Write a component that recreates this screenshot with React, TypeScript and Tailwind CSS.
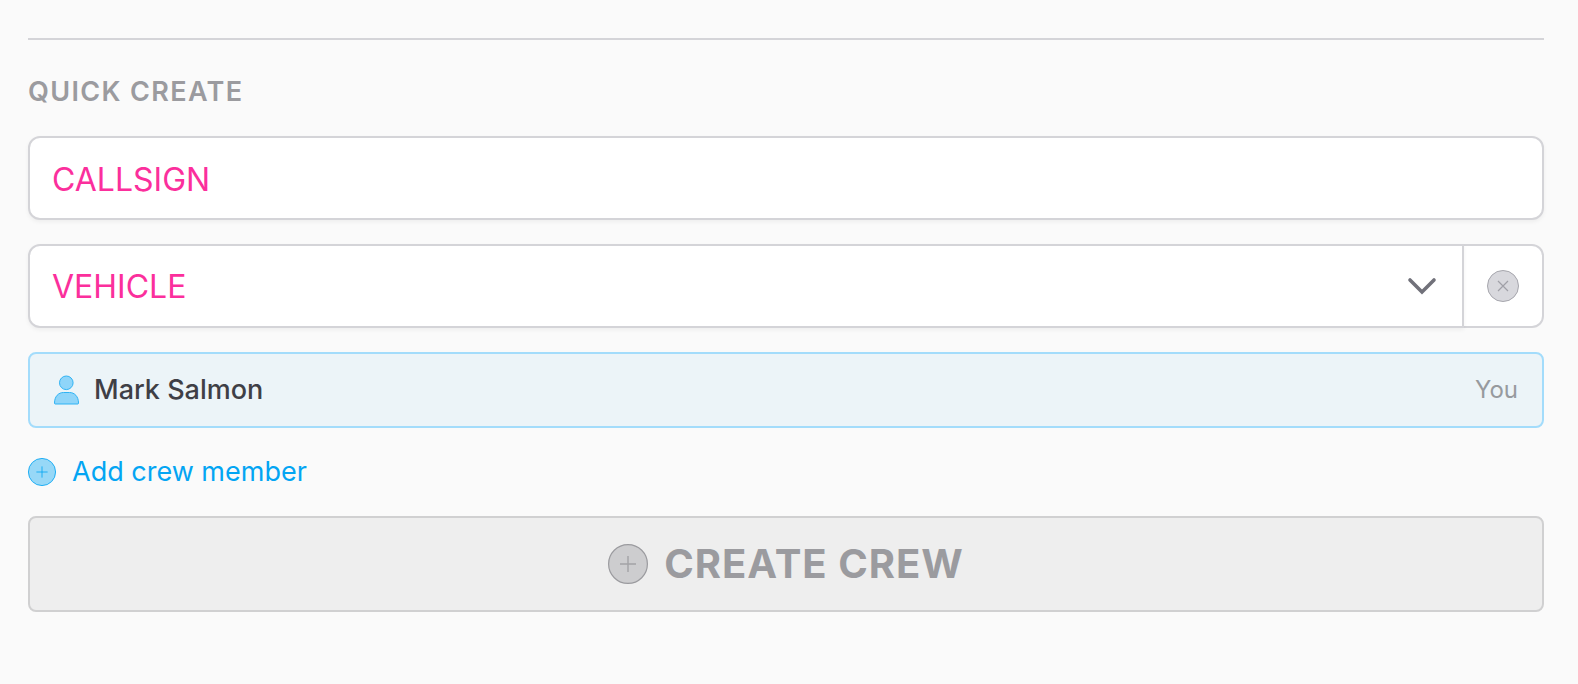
import React, { useState } from "react";

const PlusCircle = ({ className }: { className: string }) => (
  <svg viewBox="0 0 40 40" className={className} fill="none" aria-hidden="true">
    <circle
      cx="20"
      cy="20"
      r="19.4"
      fill="currentColor"
      fillOpacity="0.4"
      stroke="currentColor"
      strokeWidth="1.2"
    />
    <path
      d="M20 12v16M12 20h16"
      stroke="currentColor"
      strokeOpacity="0.85"
      strokeWidth="1.4"
    />
  </svg>
);

const ClearCircle = () => (
  <svg viewBox="0 0 32 32" className="size-8" fill="none" aria-hidden="true">
    <circle cx="16" cy="16" r="15.5" fill="#d8d8dd" stroke="#a6a6ad" />
    <path d="M11 11l10 10M21 11l-10 10" stroke="#a0a0a7" strokeWidth="1.2" />
  </svg>
);

const Person = () => (
  <svg
    viewBox="0 0 26 30"
    className="h-[30px] w-[26px] shrink-0"
    fill="#8fd5f9"
    stroke="#2fb3f4"
    aria-hidden="true"
  >
    <circle cx="12.3" cy="7.8" r="6.8" />
    <path d="M1.2 29h22.600q.7 0 .7-1c0-6.500-4-10.500-9-10.500h-6c-5 0-9 4-9 10.500q0 1 .7 1z" />
  </svg>
);

const App = () => {
  const [callsign, setCallsign] = useState("");
  const [vehicle, setVehicle] = useState("");

  return (
    <div className="min-h-screen bg-[#fafafa] pt-[38px] pr-[34px] pb-[72px] pl-7 font-['Inter',sans-serif]">
      <hr className="border-t-2 border-[#d4d4d8]" />

      <form className="mt-8 flex flex-col gap-6">
        <h2 className="text-[27px] leading-10 font-semibold tracking-wider text-[#9b9b9f] uppercase">
          Quick Create
        </h2>

        <input
          type="text"
          aria-label="Callsign"
          placeholder="CALLSIGN"
          value={callsign}
          onChange={(e) => setCallsign(e.target.value)}
          className="h-21 w-full rounded-xl border-2 border-[#d4d4d8] bg-white px-[22px] pt-0.5 text-[32px] text-[#fb2f9c] shadow-[0_2px_4px_rgba(0,0,0,0.05)] outline-none placeholder:text-[#fb2f9c]"
        />

        {/* Vehicle */}
        <div className="flex">
          <div className="relative grow">
            <select
              aria-label="Vehicle"
              value={vehicle}
              onChange={(e) => setVehicle(e.target.value)}
              className="h-21 w-full appearance-none rounded-l-xl border-2 border-[#d4d4d8] bg-white px-[22px] pt-0.5 text-[32px] text-[#fb2f9c] shadow-[0_2px_4px_rgba(0,0,0,0.05)] outline-none"
            >
              <option value="">VEHICLE</option>
            </select>
            <svg
              viewBox="0 0 32 20"
              className="pointer-events-none absolute top-8 right-[26px] h-5 w-8"
              fill="none"
              stroke="#71717a"
              strokeWidth="3.6"
              strokeLinecap="round"
              aria-hidden="true"
            >
              <path d="M4 4l12 12 12-12" />
            </svg>
          </div>
          <button
            type="button"
            aria-label="Clear vehicle"
            onClick={() => setVehicle("")}
            className="flex h-21 w-20 items-center justify-center rounded-r-xl border-2 border-l-0 border-[#d4d4d8] bg-white"
          >
            <ClearCircle />
          </button>
        </div>

        {/* Crew */}
        <div className="flex h-19 items-center gap-3.5 rounded-lg border-2 border-[#a3dcfb] bg-[#ecf4f8] px-6">
          <Person />
          <span className="grow text-[27px] leading-10 font-medium text-[#3f3f46]">
            Mark Salmon
          </span>
          <span className="text-2xl text-[#979a9e]">You</span>
        </div>

        <button
          type="button"
          className="flex items-center gap-4 self-start text-[27px] leading-10 text-[#03a5f3]"
        >
          <PlusCircle className="size-7" />
          Add crew member
        </button>

        <button
          type="submit"
          disabled
          className="flex h-24 items-center justify-center gap-4 rounded-lg border-2 border-[#d0d0d1] bg-[#eeeeee] text-[40px] font-bold tracking-wide text-[#9b9b9f] uppercase"
        >
          <PlusCircle className="size-10" />
          Create Crew
        </button>
      </form>
    </div>
  );
};

export default App;
